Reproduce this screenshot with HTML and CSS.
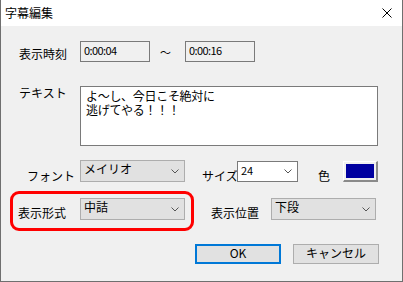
FILE: index.html
```html
<!DOCTYPE html>
<html lang="ja">
<head>
    <meta charset="UTF-8">
    <title>字幕編集</title>
    <link rel="stylesheet" href="styles.css">
</head>
<body>
    <div class="window">
        <div class="titlebar">
            <span class="title">字幕編集</span>
            <svg class="close" width="10" height="10" viewBox="0 0 10 10">
                <path d="M0.5 0.5 L9.5 9.5 M9.5 0.5 L0.5 9.5" stroke="#000" stroke-width="1" fill="none"/>
            </svg>
        </div>
        <div class="content">
            <div class="row row-time">
                <span class="label lbl-time">表示時刻</span>
                <div class="field time">0:00:04</div>
                <span class="tilde">～</span>
                <div class="field time">0:00:16</div>
            </div>

            <div class="row row-text">
                <span class="label lbl-text">テキスト</span>
                <div class="textarea">
                    <div class="line">よ～し、今日こそ絶対に</div>
                    <div class="line">逃げてやる！！！</div>
                </div>
            </div>

            <div class="row row-font">
                <span class="label lbl-font">フォント</span>
                <div class="combo combo-font">
                    <span>メイリオ</span>
                    <svg class="chev" width="8" height="5" viewBox="0 0 8 5"><path d="M0.5 0.5 L4 4 L7.5 0.5" stroke="#555" fill="none"/></svg>
                </div>
                <span class="label lbl-size">サイズ</span>
                <div class="combo combo-size">
                    <span>24</span>
                    <svg class="chev" width="8" height="5" viewBox="0 0 8 5"><path d="M0.5 0.5 L4 4 L7.5 0.5" stroke="#555" fill="none"/></svg>
                </div>
                <span class="label lbl-color">色</span>
                <div class="color-btn"><div class="swatch"></div></div>
            </div>

            <div class="row row-mode">
                <div class="highlight">
                    <span class="label lbl-mode">表示形式</span>
                    <div class="combo combo-mode">
                        <span>中詰</span>
                        <svg class="chev" width="8" height="5" viewBox="0 0 8 5"><path d="M0.5 0.5 L4 4 L7.5 0.5" stroke="#555" fill="none"/></svg>
                    </div>
                </div>
                <span class="label lbl-pos">表示位置</span>
                <div class="combo combo-pos">
                    <span>下段</span>
                    <svg class="chev" width="8" height="5" viewBox="0 0 8 5"><path d="M0.5 0.5 L4 4 L7.5 0.5" stroke="#555" fill="none"/></svg>
                </div>
            </div>

            <div class="row row-buttons">
                <div class="btn btn-ok">OK</div>
                <div class="btn">キャンセル</div>
            </div>
        </div>
    </div>
</body>
</html>
```

FILE: styles.css
```css
body {
    margin: 0;
    padding: 0;
    font-family: "Noto Sans CJK JP", "Noto Sans", sans-serif;
    font-size: 12px;
    color: #000;
    background-color: #f0f0f0;
}
.window {
    width: 401px;
    height: 281px;
    border-left: 1px solid #6f6f6f;
    border-right: 1px solid #6f6f6f;
    border-bottom: 1px solid #6f6f6f;
    background-color: #f0f0f0;
    overflow: hidden;
}
.titlebar {
    height: 26px;
    background-color: #fff;
    display: flex;
    align-items: center;
    justify-content: space-between;
    padding: 0 10px 0 4px;
}
.title {
    font-size: 12px;
    line-height: 14px;
    margin-top: -1px;
}
.close {
    display: block;
}
.content {
    display: flex;
    flex-direction: column;
}
.row {
    display: flex;
    align-items: flex-start;
}
.label {
    line-height: 14px;
    white-space: nowrap;
}

/* time row */
.row-time {
    margin-top: 15px;
    height: 21px;
}
.lbl-time {
    margin-left: 18px;
    width: 61px;
    margin-top: 6px;
}
.field {
    box-sizing: border-box;
    height: 21px;
    border: 1px solid #7a7a7a;
    background-color: #f0f0f0;
}
.time {
    width: 70px;
    font-size: 11px;
    line-height: 14px;
    padding: 1px 0 0 3px;
    letter-spacing: -0.6px;
}
.tilde {
    margin: 4px 15px 0 10px;
    width: 10px;
    line-height: 14px;
    font-size: 11px;
}

/* text row */
.row-text {
    margin-top: 24px;
}
.lbl-text {
    margin-left: 18px;
    width: 61px;
}
.textarea {
    box-sizing: border-box;
    width: 298px;
    height: 60px;
    border: 1px solid #7a7a7a;
    background-color: #fff;
    padding: 1px 0 0 5px;
    letter-spacing: -0.3px;
}
.line {
    line-height: 16px;
    height: 14px;
}

/* font row */
.row-font {
    margin-top: 14px;
    height: 22px;
}
.lbl-font {
    margin-left: 26px;
    width: 53px;
    margin-top: 9px;
}
.combo {
    box-sizing: border-box;
    height: 22px;
    border: 1px solid #adadad;
    background-color: #e1e1e1;
    display: flex;
    align-items: center;
    justify-content: space-between;
    padding: 0 5px 0 3px;
    line-height: 14px;
}
.combo span {
    margin-top: -4px;
}
.combo-font {
    width: 105px;
}
.lbl-size {
    margin-left: 17px;
    width: 35px;
    margin-top: 9px;
}
.combo-size {
    width: 61px;
    height: 21px;
    margin-top: 1px;
    background-color: #fff;
    border-color: #7a7a7a;
}
.combo-size span {
    font-size: 11px;
}
.lbl-color {
    margin-left: 20px;
    width: 25px;
    margin-top: 9px;
}
.color-btn {
    box-sizing: border-box;
    width: 35px;
    height: 21px;
    margin-top: 1px;
    padding: 2px;
    background-color: #f0f0f0;
    border-top: 1px solid #fff;
    border-left: 1px solid #fff;
    border-right: 2px solid #8a8a8a;
    border-bottom: 2px solid #8a8a8a;
}
.swatch {
    width: 100%;
    height: 100%;
    background-color: #0000a0;
}

/* mode row */
.row-mode {
    margin-top: 9px;
}
.highlight {
    display: flex;
    align-items: flex-start;
    margin-left: 9px;
    border: 3px solid #ff0000;
    border-radius: 9px;
    padding: 4px 6px 8px 5px;
}
.lbl-mode {
    width: 62px;
    margin-top: 8px;
}
.combo-mode {
    width: 105px;
}
.lbl-pos {
    margin-left: 17px;
    width: 60px;
    margin-top: 15px;
}
.combo-pos {
    width: 105px;
    margin-top: 7px;
}

/* buttons */
.row-buttons {
    margin-top: 13px;
    margin-left: 194px;
    gap: 12px;
}
.btn {
    box-sizing: border-box;
    width: 86px;
    height: 20px;
    border: 1px solid #adadad;
    background-color: #e1e1e1;
    text-align: center;
    line-height: 16px;
    font-size: 12px;
}
.btn-ok {
    border: 2px solid #0078d7;
    line-height: 14px;
}
```
